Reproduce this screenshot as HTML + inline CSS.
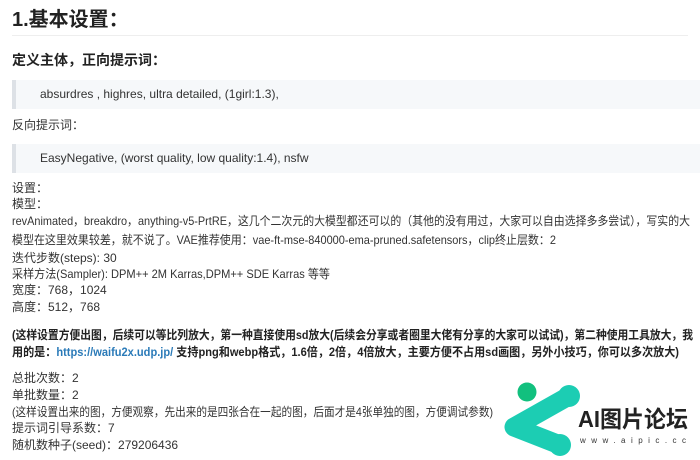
<!DOCTYPE html>
<html><head><meta charset="utf-8"><style>
body{margin:0;width:700px;height:460px;background:#fff;overflow:hidden;font-family:"Liberation Sans","Noto Sans CJK SC",sans-serif;color:#333;position:relative}
.l{position:absolute;left:12px;font-size:12px;white-space:nowrap;line-height:16px}
h1{position:absolute;left:12px;top:6px;margin:0;font-size:20px;font-weight:bold;color:#222;line-height:28px}
.hr{position:absolute;left:12px;right:12px;top:35px;height:1px;background:#eee}
h2{position:absolute;left:12px;top:50px;margin:0;font-size:14px;font-weight:bold;color:#222;line-height:20px}
.bq{position:absolute;left:12px;right:0;height:29px;background:#f6f8fa;border-left:4px solid #dde1e6;box-sizing:border-box;padding-left:24px;font-size:12px;line-height:29px;color:#333}
svg.t{position:absolute;left:12px;overflow:visible}
svg text{font-family:"Liberation Sans","Noto Sans CJK SC",sans-serif;font-size:12px;fill:#333}
svg text.b{font-weight:bold;fill:#222}
</style></head><body>
<h1>1.基本设置：</h1>
<div class="hr"></div>
<h2>定义主体，正向提示词：</h2>
<div class="bq" style="top:80px">absurdres , highres, ultra detailed, (1girl:1.3),</div>
<div class="l" style="top:117px">反向提示词：</div>
<div class="bq" style="top:144px">EasyNegative, (worst quality, low quality:1.4), nsfw</div>
<div class="l" style="top:180px">设置：</div>
<div class="l" style="top:196px">模型：</div>
<svg class="t" style="top:213px" width="680" height="16"><text x="0" y="12" textLength="678" lengthAdjust="spacingAndGlyphs">revAnimated，breakdro，anything-v5-PrtRE，这几个二次元的大模型都还可以的（其他的没有用过，大家可以自由选择多多尝试），写实的大</text></svg>
<svg class="t" style="top:232px" width="560" height="16"><text x="0" y="12" textLength="544" lengthAdjust="spacingAndGlyphs">模型在这里效果较差，就不说了。VAE推荐使用：vae-ft-mse-840000-ema-pruned.safetensors，clip终止层数：2</text></svg>
<div class="l" style="top:250px">迭代步数(steps): 30</div>
<svg class="t" style="top:266px" width="330" height="16"><text x="0" y="12" textLength="318" lengthAdjust="spacingAndGlyphs">采样方法(Sampler): DPM++ 2M Karras,DPM++ SDE Karras 等等</text></svg>
<div class="l" style="top:282px">宽度：768，1024</div>
<div class="l" style="top:299px">高度：512，768</div>
<svg class="t" style="top:327px" width="690" height="16"><text class="b" x="0" y="12" textLength="681" lengthAdjust="spacingAndGlyphs">(这样设置方便出图，后续可以等比列放大，第一种直接使用sd放大(后续会分享或者圈里大佬有分享的大家可以试试)，第二种使用工具放大，我</text></svg>
<svg class="t" style="top:344px" width="690" height="16"><text class="b" x="0" y="12" textLength="667" lengthAdjust="spacingAndGlyphs">用的是：<tspan fill="#2a7ab8">https://waifu2x.udp.jp/</tspan> 支持png和webp格式，1.6倍，2倍，4倍放大，主要方便不占用sd画图，另外小技巧，你可以多次放大)</text></svg>
<div class="l" style="top:370px">总批次数：2</div>
<div class="l" style="top:387px">单批数量：2</div>
<svg class="t" style="top:404px" width="490" height="16"><text x="0" y="12" textLength="481" lengthAdjust="spacingAndGlyphs">(这样设置出来的图，方便观察，先出来的是四张合在一起的图，后面才是4张单独的图，方便调试参数)</text></svg>
<div class="l" style="top:420px">提示词引导系数：7</div>
<div class="l" style="top:437px">随机数种子(seed)：279206436</div>
<svg style="position:absolute;left:490px;top:370px" width="210" height="90">
<circle cx="37" cy="22" r="9.5" fill="#12c07e"/>
<path d="M79 26 L24 57 L70 75" fill="none" stroke="#1ccdb3" stroke-width="19" stroke-linecap="round" stroke-linejoin="round"/>
<circle cx="79" cy="26" r="11" fill="#1ccdb3"/>
<circle cx="70" cy="75" r="11" fill="#1ccdb3"/>
<text x="88" y="57" textLength="110" lengthAdjust="spacingAndGlyphs" style="font-size:23px;font-weight:bold;fill:#222">AI图片论坛</text>
<text x="90" y="73" textLength="106" lengthAdjust="spacing" style="font-size:8px;fill:#333">www.aipic.cc</text>
</svg>
</body></html>
